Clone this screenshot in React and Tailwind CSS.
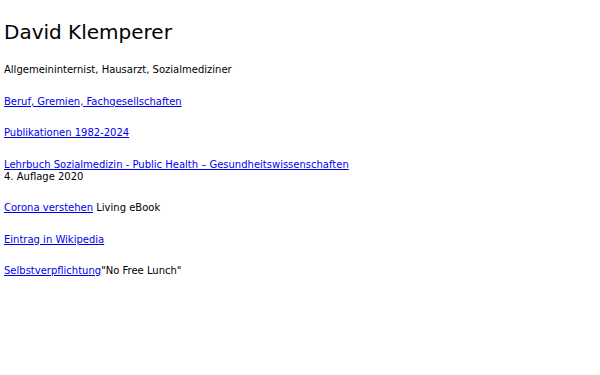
import React from 'react';

const Link = ({ children }) => (
  <a href="#" className="text-[#0000ee] underline">{children}</a>
);

export default function App() {
  return (
    <div className="min-h-screen bg-white px-[4px] pt-[20px] text-black" style={{ fontFamily: '"DejaVu Sans", sans-serif' }}>
      <h1 className="text-[20px] leading-[24px]">David Klemperer</h1>
      <div className="mt-[20px] text-[10px] leading-[12px] flex flex-col gap-[19.5px]">
        <p>Allgemeininternist, Hausarzt, Sozialmediziner</p>
        <p><Link>Beruf, Gremien, Fachgesellschaften</Link></p>
        <p><Link>Publikationen 1982-2024</Link></p>
        <p>
          <Link>Lehrbuch Sozialmedizin - Public Health – Gesundheitswissenschaften</Link>
          <br />
          4. Auflage 2020
        </p>
        <p><Link>Corona verstehen</Link> Living eBook</p>
        <p><Link>Eintrag in Wikipedia</Link></p>
        <p><Link>Selbstverpflichtung</Link>"No Free Lunch"</p>
      </div>
    </div>
  );
}
